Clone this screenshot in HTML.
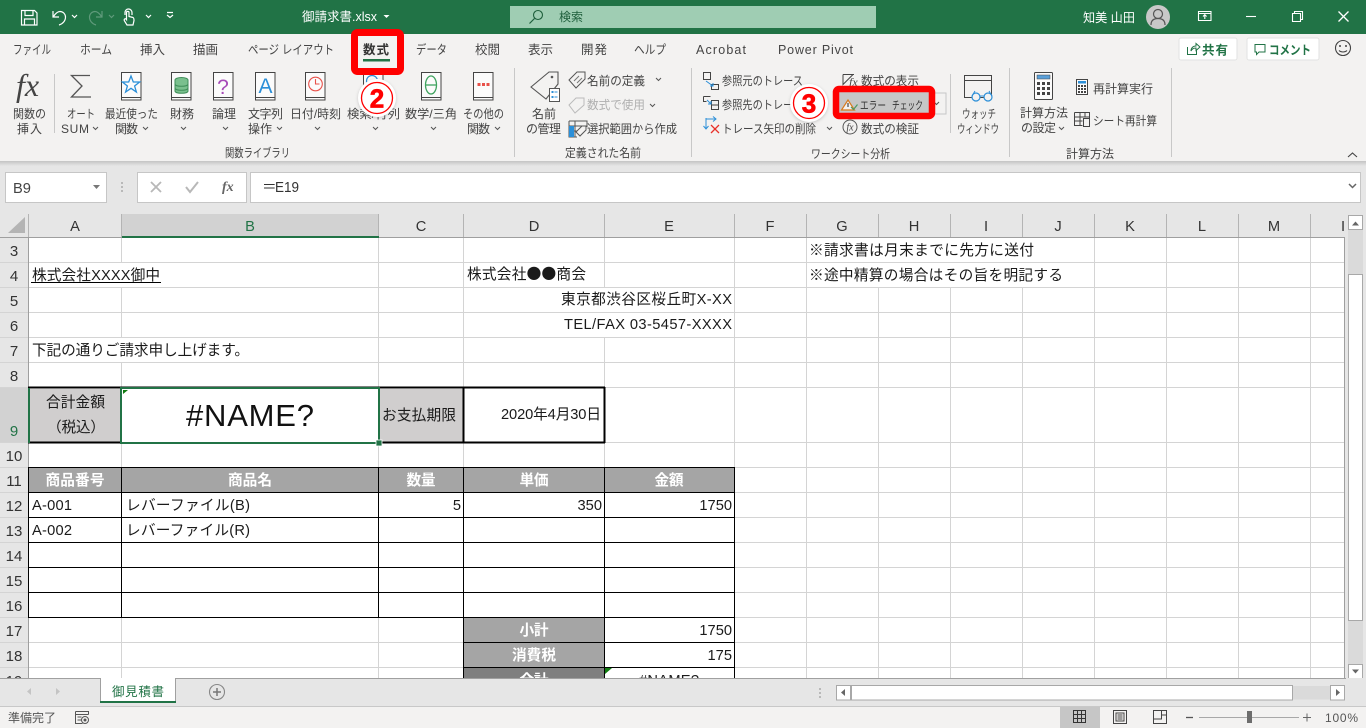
<!DOCTYPE html>
<html lang="ja"><head><meta charset="utf-8"><title>御請求書.xlsx - Excel</title>
<style>
html,body{margin:0;padding:0;background:#f3f2f1;width:1366px;height:728px;overflow:hidden}
svg{display:block;position:absolute;left:0;top:0}
text{font-family:"Liberation Sans","Noto Sans CJK JP",sans-serif}
.fx{font-family:"Liberation Serif",serif;font-style:italic}
.t{font-size:12.5px;fill:#444}
.r{font-size:12px;fill:#444}
.c{font-size:14.67px;fill:#1a1a1a}
.j{font-family:"Noto Sans CJK JP",sans-serif}
.h{font-size:14.67px;fill:#333;text-anchor:middle}
.n{font-size:15px;fill:#333;text-anchor:middle}
.w{font-size:14.67px;fill:#fff;text-anchor:middle;font-weight:700}
.e{text-anchor:end}
.m{text-anchor:middle}
</style></head><body>
<svg width="1366" height="728" viewBox="0 0 1366 728" xmlns="http://www.w3.org/2000/svg">
<defs>
<path id="bk" d="M.5 .5h19.5v27.5H.5zM.5 25.500h19.500" fill="#fbfbfb" stroke="#444" stroke-width="1"/>
<linearGradient id="sh" x1="0" y1="0" x2="0" y2="1"><stop offset="0" stop-color="#c4c4c4"/><stop offset="1" stop-color="#e6e6e6"/></linearGradient>
<filter id="bl" x="-30%" y="-30%" width="160%" height="160%"><feGaussianBlur stdDeviation="1.5"/></filter>
</defs>

<!-- backgrounds -->
<rect width="1366" height="728" fill="#e6e6e6"/>
<rect width="1366" height="34" fill="#217346"/>
<rect y="34" width="1366" height="127" fill="#f3f2f1"/>
<rect y="161" width="1366" height="5" fill="url(#sh)"/>

<!-- title bar -->
<g fill="none" stroke="#fff" stroke-width="1.2">
<path d="M21.500 10.500h13l2.500 2.500v12h-15.500zM25 10.500v5h8v-5M24.500 25v-6h10v6"/>
<path d="M53 11v6h6M53.500 16.500c2-3 4-5 6.500-5 3 0 5.500 2.500 5.500 5.500 0 4-3 7-6.500 8"/>
<path d="M72 15l2.500 2.500 2.500-2.500M146 15l2.500 2.500 2.500-2.500M167 15l3 2.500 3-2.500M167 12.500h6"/>
<path d="M125 15v-2.500a3.500 3.500 0 0 1 7 0V15M127 25l-2.500-4c-1-2 1-3 2-1.500V12.500c0-1.500 2.500-1.500 2.500 0v4l4 1c1 .5 1 1.500 1 3l-1 4.500z"/>
</g>
<g fill="none" stroke="#5f9a7b" stroke-width="1.200">
<path d="M102 11v6h-6M101.500 16.500c-2-3-4-5-6.500-5-3 0-5.500 2.500-5.500 5.500 0 4 3 7 6.500 8M109 15l2.500 2.500 2.500-2.500"/>
</g>
<text x="302" y="21" font-size="12.5" fill="#fff" textLength="75" lengthAdjust="spacingAndGlyphs">御請求書.xlsx</text>
<path d="M383.500 15h6l-3 3z" fill="#fff"/>
<rect x="510" y="6" width="366" height="22" fill="#9fcdb3"/>
<circle cx="538" cy="15" r="4.500" fill="none" stroke="#1f5f3c" stroke-width="1.100"/>
<path d="M534.500 18.500L529.500 23.500" stroke="#1f5f3c" stroke-width="1.200"/>
<text x="559" y="21" font-size="12" fill="#1f5f3c" textLength="24">検索</text>
<text x="1083" y="22" font-size="12.5" fill="#fff" textLength="52" lengthAdjust="spacingAndGlyphs">知美 山田</text>
<circle cx="1158" cy="17" r="12" fill="#c8c8c8"/>
<circle cx="1158" cy="14" r="4.500" fill="none" stroke="#555" stroke-width="1.200"/>
<path d="M1151 25c0-5 3-6.500 7-6.500s7 1.500 7 6.500" fill="none" stroke="#555" stroke-width="1.200"/>
<g fill="none" stroke="#fff" stroke-width="1.100">
<path d="M1198.500 11.500h12.500v9h-12.500zM1198.500 13.500h12.500M1204.800 19v-4M1203 16.500l1.800-1.800 1.800 1.800"/>
<path d="M1246 16.500h10"/>
<path d="M1292.500 13.500h8v8h-8zM1294.500 13.500v-2h8v8h-2"/>
<path d="M1338.500 11.500l10 10M1348.500 11.500l-10 10" stroke-width="1.300"/>
</g>

<!-- tabs -->
<g>
<text class="t" x="13" y="54" textLength="38" lengthAdjust="spacingAndGlyphs">ファイル</text>
<text class="t" x="80" y="54" textLength="32" lengthAdjust="spacingAndGlyphs">ホーム</text>
<text class="t" x="140" y="54" textLength="25">挿入</text>
<text class="t" x="193" y="54" textLength="25">描画</text>
<text class="t" x="248" y="54" textLength="31" lengthAdjust="spacingAndGlyphs">ページ</text>
<text class="t" x="282" y="54" textLength="52" lengthAdjust="spacingAndGlyphs">レイアウト</text>
<text class="t" x="416" y="54" textLength="31" lengthAdjust="spacingAndGlyphs">データ</text>
<text class="t" x="475" y="54" textLength="25">校閲</text>
<text class="t" x="528" y="54" textLength="25">表示</text>
<text class="t" x="581" y="54" textLength="26">開発</text>
<text class="t" x="634" y="54" textLength="32" lengthAdjust="spacingAndGlyphs">ヘルプ</text>
<text class="t" x="696" y="54" textLength="50">Acrobat</text>
<text class="t" x="778" y="54" textLength="75">Power Pivot</text>
</g>

<!-- share / comment -->
<rect x="1179" y="38" width="58" height="22" rx="2" fill="#fff" stroke="#e2e2e2"/>
<path d="M1187.500 47v7.500h9v-4M1191 51c0-3 2-5 5-5v-2.500l4 3.500-4 3.500V48c-2 0-4 1-5 3z" fill="none" stroke="#217346" stroke-width="1"/>
<text x="1202" y="54.5" font-size="12.5" font-weight="700" fill="#217346" textLength="26">共有</text>
<rect x="1247" y="38" width="72" height="22" rx="2" fill="#fff" stroke="#e2e2e2"/>
<path d="M1255 44.500h10v7.500h-6l-2.500 2.500V52h-1.500z" fill="none" stroke="#217346" stroke-width="1"/>
<text x="1269" y="54.5" font-size="12.5" font-weight="700" fill="#217346" textLength="42" lengthAdjust="spacingAndGlyphs">コメント</text>
<circle cx="1343" cy="48" r="7.500" fill="none" stroke="#444" stroke-width="1.100"/>
<circle cx="1340" cy="46" r="1" fill="#444"/><circle cx="1346" cy="46" r="1" fill="#444"/>
<path d="M1339 50.500c2 2 6 2 8 0" fill="none" stroke="#444"/>

<!-- ribbon separators -->
<path d="M54.500 74v59M514.500 68v89M691.500 68v89M950.500 74v59M1009.500 68v89M1171.500 68v89" stroke="#c8c8c8" stroke-width="1" fill="none"/>

<!-- function library icons -->
<text x="16" y="96" class="fx" font-size="32" fill="#444">fx</text>
<path d="M90 75.500H71.500L82 86 71.500 97H91" fill="none" stroke="#555" stroke-width="1.300"/>
<use href="#bk" x="121" y="72"/>
<path d="M131 76l2.300 6h6.300l-5 4 1.800 6-5.400-3.700-5.400 3.700 1.800-6-5-4h6.300z" fill="none" stroke="#2b8fd8" stroke-width="1.300"/>
<use href="#bk" x="171" y="72"/>
<g fill="#7ac08e" stroke="#3f8e59" stroke-width="1"><ellipse cx="181.500" cy="80" rx="6.500" ry="2.500"/><path d="M175 80v11c0 3 13 3 13 0V80" /><path d="M175 84c0 3 13 3 13 0M175 88c0 3 13 3 13 0" fill="none"/></g>
<use href="#bk" x="213" y="72"/>
<text x="223" y="94" class="m" font-size="21" fill="#a64ab8">?</text>
<use href="#bk" x="255" y="72"/>
<text x="265.5" y="93" class="m" font-size="21" fill="#2b8fd8">A</text>
<use href="#bk" x="305" y="72"/>
<circle cx="315.500" cy="84" r="6.800" fill="none" stroke="#e8514a" stroke-width="1.100"/>
<path d="M315.500 79v5h4" fill="none" stroke="#e8514a" stroke-width="1.100"/>
<use href="#bk" x="363" y="72"/>
<circle cx="372" cy="81" r="5.500" fill="none" stroke="#2b8fd8" stroke-width="1.200"/>
<use href="#bk" x="421" y="72"/>
<ellipse cx="431" cy="85" rx="5.500" ry="9" fill="none" stroke="#3fa35f" stroke-width="1.300"/>
<path d="M425.500 85h11" stroke="#3fa35f" stroke-width="1.300"/>
<use href="#bk" x="473" y="72"/>
<path d="M477.500 83h3v3h-3zM482 83h3v3h-3zM486.500 83h3v3h-3z" fill="#e8514a"/>

<g>
<text class="r" x="13" y="118" textLength="33" lengthAdjust="spacingAndGlyphs">関数の</text>
<text class="r" x="17" y="133" textLength="25">挿入</text>
<text class="r" x="67" y="118" textLength="28" lengthAdjust="spacingAndGlyphs">オート</text>
<text class="r" x="61" y="133" textLength="28">SUM</text>
<text class="r" x="105" y="118" textLength="53" lengthAdjust="spacingAndGlyphs">最近使った</text>
<text class="r" x="115" y="133" textLength="23">関数</text>
<text class="r" x="170" y="118" textLength="24">財務</text>
<text class="r" x="212" y="118" textLength="24">論理</text>
<text class="r" x="248" y="118" textLength="35">文字列</text>
<text class="r" x="248" y="133" textLength="24">操作</text>
<text class="r" x="290" y="118" textLength="51" lengthAdjust="spacingAndGlyphs">日付/時刻</text>
<text class="r" x="347" y="118" textLength="53" lengthAdjust="spacingAndGlyphs">検索/行列</text>
<text class="r" x="405" y="118" textLength="52" lengthAdjust="spacingAndGlyphs">数学/三角</text>
<text class="r" x="463" y="118" textLength="41" lengthAdjust="spacingAndGlyphs">その他の</text>
<text class="r" x="467" y="133" textLength="23">関数</text>
<text class="r" x="225" y="157" textLength="65" lengthAdjust="spacingAndGlyphs">関数ライブラリ</text>
</g>
<path d="M93 127l2.500 2.500 2.500-2.500M143 127l2.500 2.500 2.500-2.500M181 127l2.500 2.500 2.500-2.500M223 127l2.500 2.500 2.500-2.500M277 127l2.500 2.500 2.500-2.500M315 127l2.500 2.500 2.500-2.500M373 127l2.500 2.500 2.500-2.500M431 127l2.500 2.500 2.500-2.500M495 127l2.500 2.500 2.500-2.500M656 78l2.500 2.500 2.500-2.500M650 104l2.500 2.500 2.500-2.500M827 127l2.500 2.500 2.500-2.500M1059 127l2.500 2.500 2.500-2.500" fill="none" stroke="#555" stroke-width="1"/>

<!-- defined names -->
<path d="M531 87l18-15h9v12l-12 15z" fill="none" stroke="#555" stroke-width="1.100"/>
<circle cx="552" cy="77" r="1.300" fill="#555"/>
<rect x="549.500" y="88.500" width="10" height="13" fill="#fff" stroke="#555"/>
<path d="M551.500 91h2v2h-2zM551.500 96h2v2h-2z" fill="#2b8fd8"/><path d="M554.500 92h3M554.500 97h3" stroke="#2b8fd8"/>
<text class="r" x="532" y="118" textLength="24">名前</text>
<text class="r" x="526" y="133" textLength="35">の管理</text>
<path d="M569 80l8-8h8v7l-9 9z" fill="none" stroke="#555"/><path d="M574 81l5-5M577 83l5-5" stroke="#777"/>
<text class="r" x="587" y="85" textLength="58" lengthAdjust="spacingAndGlyphs">名前の定義</text>
<path d="M569 105l7-7h8v7l-9 8z" fill="none" stroke="#bbb"/>
<text class="r" x="587" y="109" textLength="58" lengthAdjust="spacingAndGlyphs" style="fill:#b0b0b0">数式で使用</text>
<path d="M569 121h18v6M569 121v16h8M575 121v16M569 126h18M569 131h8" fill="none" stroke="#555"/>
<rect x="569" y="126" width="5" height="11" fill="#2b8fd8"/>
<path d="M576 132l6-6h4v4l-6 6z" fill="#f3f2f1" stroke="#555"/>
<text class="r" x="587" y="133" textLength="90" lengthAdjust="spacingAndGlyphs">選択範囲から作成</text>
<text class="r" x="565" y="157" textLength="76" lengthAdjust="spacingAndGlyphs">定義された名前</text>

<!-- formula audit -->
<g fill="none" stroke="#444" stroke-width="1">
<path d="M703.500 72.500h7v7h-7zM711.500 84.500h7v5h-7z"/>
<path d="M703.500 96.500h7M703.500 96.500v5h3M711.500 100.500h7v9h-7zM711.500 105h7"/>
</g>
<path d="M706 81l7 5M713 83v3h-3M707 100l4 4M711 101v3h-3M706 118v11M703.500 126l2.500 3 2.500-3M706 119h10M713 116.500l3 2.500-3 2.500" fill="none" stroke="#2b8fd8" stroke-width="1"/>
<path d="M711 125l8 8M719 125l-8 8" stroke="#e8312a" stroke-width="1.300"/>
<text class="r" x="722" y="85" textLength="81" lengthAdjust="spacingAndGlyphs">参照元のトレース</text>
<text class="r" x="722" y="109" textLength="81" lengthAdjust="spacingAndGlyphs">参照先のトレース</text>
<text class="r" x="722" y="133" textLength="94" lengthAdjust="spacingAndGlyphs">トレース矢印の削除</text>
<path d="M843 74.500h11M843 74.500v10l10-10" fill="none" stroke="#444"/>
<text x="849" y="86" class="fx" font-size="12" fill="#444">fx</text>
<text class="r" x="861" y="85" textLength="58" lengthAdjust="spacingAndGlyphs">数式の表示</text>
<circle cx="850" cy="127" r="7" fill="none" stroke="#555"/>
<text x="850" y="130.5" class="fx m" font-size="10" fill="#444">fx</text>
<text class="r" x="861" y="133" textLength="58" lengthAdjust="spacingAndGlyphs">数式の検証</text>
<text class="r" x="811" y="158" textLength="79" lengthAdjust="spacingAndGlyphs">ワークシート分析</text>
<rect x="930" y="93" width="16" height="21" fill="#f3f2f1" stroke="#c6c6c6"/>
<path d="M934 102l2.500 2.500 2.500-2.500" fill="none" stroke="#555"/>

<!-- watch -->
<path d="M964.500 75.500h27v22h-27zM964.500 80.500h27" fill="none" stroke="#444"/>
<circle cx="976" cy="97" r="4" fill="#f3f2f1" stroke="#2b8fd8" stroke-width="1.200"/>
<circle cx="988" cy="97" r="4" fill="#f3f2f1" stroke="#2b8fd8" stroke-width="1.200"/>
<path d="M980 96h4M972 96l3-5M992 96l-3-5" fill="none" stroke="#2b8fd8"/>
<text class="r" x="962" y="118" textLength="34" lengthAdjust="spacingAndGlyphs">ウォッチ</text>
<text class="r" x="957" y="133" textLength="42" lengthAdjust="spacingAndGlyphs">ウィンドウ</text>

<!-- calculation -->
<rect x="1034.500" y="72.500" width="18" height="27" rx="1" fill="#fbfbfb" stroke="#444"/>
<rect x="1037" y="75" width="13" height="4" fill="#5a9fd8" stroke="#444" stroke-width=".5"/>
<path d="M1037 82h3v3h-3zM1042 82h3v3h-3zM1047 82h3v3h-3zM1037 87h3v3h-3zM1042 87h3v3h-3zM1047 87h3v3h-3zM1037 92h3v3h-3zM1042 92h3v3h-3zM1047 92h3v3h-3z" fill="#444"/>
<text class="r" x="1020" y="117" textLength="48">計算方法</text>
<text class="r" x="1021" y="132" textLength="35">の設定</text>
<rect x="1076.500" y="79.500" width="11" height="15" fill="#fbfbfb" stroke="#444"/>
<rect x="1078" y="81" width="8" height="2.500" fill="#2b8fd8"/>
<path d="M1078 85h2v2h-2zM1081 85h2v2h-2zM1084 85h2v2h-2zM1078 88h2v2h-2zM1081 88h2v2h-2zM1084 88h2v2h-2zM1078 91h2v2h-2zM1081 91h2v2h-2zM1084 91h2v2h-2z" fill="#444"/>
<text class="r" x="1093" y="93" textLength="60">再計算実行</text>
<path d="M1074.500 112.500h15v8M1074.500 112.500v13h8M1074.500 117h15M1074.500 121h8M1080 112.500v13M1085 112.500v5" fill="none" stroke="#444"/>
<rect x="1083.500" y="118.500" width="6" height="8" fill="#f3f2f1" stroke="#444"/>
<text class="r" x="1093" y="125" textLength="64" lengthAdjust="spacingAndGlyphs">シート再計算</text>
<text class="r" x="1066" y="158" textLength="48">計算方法</text>
<path d="M1348 157l4.500-4 4.500 4" fill="none" stroke="#444" stroke-width="1.100"/>

<!-- red annotation boxes -->
<rect x="354.500" y="32.500" width="46" height="39" rx="3" fill="#f3f2f1" stroke="#f00" stroke-width="7"/>
<text x="363" y="54" font-size="12.5" font-weight="700" fill="#333" textLength="26">数式</text>
<rect x="363" y="59" width="27" height="2.500" fill="#217346"/>
<rect x="836" y="89" width="96" height="27" rx="3" fill="#c6c6c6" stroke="#f00" stroke-width="6.500"/>
<path d="M848 100l-6.500 10h13z" fill="#f3f2f1" stroke="#d87a1d" stroke-width="1.200"/>
<path d="M848 103v4" stroke="#444" stroke-width="1.200"/>
<path d="M851 107l2.500 2.500 4-5" fill="none" stroke="#4a9a63" stroke-width="1.200"/>
<text x="860" y="109" font-size="11" fill="#333" textLength="26" lengthAdjust="spacingAndGlyphs">エラー</text>
<text x="892" y="109" font-size="11" fill="#333" textLength="31" lengthAdjust="spacingAndGlyphs">チェック</text>

<!-- circled numbers -->
<circle cx="377" cy="99" r="19" fill="#777" opacity=".35" filter="url(#bl)"/>
<circle cx="377" cy="98" r="19" fill="#fff"/>
<circle cx="377" cy="98" r="15.500" fill="#fff" stroke="#f00" stroke-width="1.300"/>
<text x="377" y="107.500" class="m" font-size="26" font-weight="700" fill="#f00" stroke="#f00" stroke-width=".7">2</text>
<circle cx="809" cy="104" r="19" fill="#777" opacity=".35" filter="url(#bl)"/>
<circle cx="809" cy="103" r="19" fill="#fff"/>
<circle cx="809" cy="103" r="15.500" fill="#fff" stroke="#f00" stroke-width="1.300"/>
<text x="809" y="112.500" class="m" font-size="26" font-weight="700" fill="#f00" stroke="#f00" stroke-width=".7">3</text>

<!-- formula bar -->
<rect x="5.500" y="172.500" width="101" height="30" fill="#fff" stroke="#c6c6c6"/>
<text x="13" y="193" font-size="14.67" fill="#444">B9</text>
<path d="M93 185h7l-3.500 4z" fill="#777"/>
<path d="M122 182v2M122 186v2M122 190v2" stroke="#aaa" stroke-width="1.500"/>
<rect x="137.500" y="172.500" width="109" height="30" fill="#fff" stroke="#c6c6c6"/>
<path d="M151 182l10 10M161 182l-10 10" stroke="#b8b8b8" stroke-width="1.800"/>
<path d="M186 187l4 5 8-10" fill="none" stroke="#b8b8b8" stroke-width="2"/>
<text x="222" y="191" class="fx" font-weight="700" font-size="14" fill="#666">fx</text>
<rect x="250.500" y="172.500" width="1110" height="30" fill="#fff" stroke="#c6c6c6"/>
<text x="262" y="192" class="j" font-size="14.67" fill="#333">＝</text>
<text x="275" y="192" font-size="14.67" fill="#333" textLength="24" lengthAdjust="spacingAndGlyphs">E19</text>
<path d="M1349 184l3.500 3.500 3.500-3.500" fill="none" stroke="#666" stroke-width="1.500"/>

<!-- sheet -->
<rect x="29" y="238" width="1315" height="440" fill="#fff"/>
<path d="M25 217v16H8z" fill="#b4b4b4"/>
<rect x="122" y="214" width="257" height="23" fill="#d2d2d2"/>
<rect x="0" y="388" width="28" height="55" fill="#d2d2d2"/>
<!-- header separators -->
<path d="M28.500 214v24M121.500 214v24M378.500 214v24M463.500 214v24M604.500 214v24M734.500 214v24M806.500 214v24M878.500 214v24M950.500 214v24M1022.500 214v24M1094.500 214v24M1166.500 214v24M1238.500 214v24M1310.500 214v24" stroke="#b4b4b4" fill="none"/>
<path d="M0 237.500H1344M28.500 237V678M1344.500 237V678" stroke="#9f9f9f" fill="none"/>
<rect x="122" y="236" width="257" height="2" fill="#217346"/>
<!-- gridlines -->
<path d="M0 262.500H1344M0 287.500H1344M0 312.500H1344M0 337.500H1344M0 362.500H1344M0 387.500H1344M0 442.500H1344M0 467.500H1344M0 492.500H1344M0 517.500H1344M0 542.500H1344M0 567.500H1344M0 592.500H1344M0 617.500H1344M0 642.500H1344M0 667.500H1344" stroke="#d4d4d4" fill="none"/>
<path d="M121.500 238V263M121.500 288V338M121.500 363V678M378.500 238V678M463.500 238V678M604.500 238V288M604.500 338V678M734.500 238V678M806.500 238V678M878.500 288V678M950.500 288V678M1022.500 288V678M1094.500 238V678M1166.500 238V678M1238.500 238V678M1310.500 238V678" stroke="#d4d4d4" fill="none"/>
<path d="M28.500 238V678" stroke="#9f9f9f" fill="none"/>

<!-- fills -->
<rect x="29" y="389" width="92" height="53" fill="#d0cece"/>
<rect x="379" y="389" width="84" height="53" fill="#d0cece"/>
<rect x="29" y="468" width="705" height="24" fill="#a5a5a5"/>
<rect x="464" y="618" width="140" height="49" fill="#a5a5a5"/>
<rect x="464" y="668" width="140" height="10" fill="#7f7f7f"/>

<!-- black borders -->
<path d="M28 467.500H735M28 492.500H735M28 517.500H735M28 542.500H735M28 567.500H735M28 592.500H735M28 617.500H735M463 642.500H735M463 667.500H735M28.500 467V618M121.500 467V618M378.500 467V618M463.500 467V678M604.500 467V678M734.500 467V678" stroke="#000" fill="none"/>
<path d="M28 387.500H605M28 442.500H605M463.500 387V443M604.500 387V443" stroke="#000" stroke-width="2" fill="none"/>

<!-- selection -->
<rect x="28" y="388" width="2" height="55" fill="#217346"/>
<rect x="121" y="388" width="258" height="55" fill="#fff" stroke="#217346" stroke-width="2"/>
<rect x="376" y="440" width="6" height="6" fill="#217346" stroke="#fff" stroke-width=".8"/>
<path d="M123 390h5l-5 4z" fill="#107c10"/>
<path d="M605 668h7l-7 6z" fill="#107c10"/>

<!-- column headers -->
<g>
<text class="h" x="75" y="231">A</text>
<text class="h" x="250" y="231" style="fill:#217346">B</text>
<text class="h" x="421" y="231">C</text>
<text class="h" x="534" y="231">D</text>
<text class="h" x="669" y="231">E</text>
<text class="h" x="770" y="231">F</text>
<text class="h" x="842" y="231">G</text>
<text class="h" x="914" y="231">H</text>
<text class="h" x="986" y="231">I</text>
<text class="h" x="1058" y="231">J</text>
<text class="h" x="1130" y="231">K</text>
<text class="h" x="1202" y="231">L</text>
<text class="h" x="1274" y="231">M</text>
<text class="h" x="1343" y="231">I</text>
</g>
<!-- row headers -->
<g>
<text class="n" x="14" y="256">3</text>
<text class="n" x="14" y="281">4</text>
<text class="n" x="14" y="306">5</text>
<text class="n" x="14" y="331">6</text>
<text class="n" x="14" y="356">7</text>
<text class="n" x="14" y="381">8</text>
<text class="n" x="14" y="436" style="fill:#217346">9</text>
<text class="n" x="14" y="461">10</text>
<text class="n" x="14" y="486">11</text>
<text class="n" x="14" y="511">12</text>
<text class="n" x="14" y="536">13</text>
<text class="n" x="14" y="561">14</text>
<text class="n" x="14" y="586">15</text>
<text class="n" x="14" y="611">16</text>
<text class="n" x="14" y="636">17</text>
<text class="n" x="14" y="661">18</text>
</g>
<!-- cells -->
<g>
<text class="c" x="809" y="255" textLength="225">※請求書は月末までに先方に送付</text>
<text class="c" x="809" y="280" textLength="254">※途中精算の場合はその旨を明記する</text>
<text class="c" x="32" y="280" textLength="128">株式会社XXXX御中</text>
<rect x="31" y="282" width="130" height="1" fill="#000"/>
<text class="c j" x="467" y="279" textLength="119">株式会社●●商会</text>
<text class="c" x="561" y="304" textLength="171">東京都渋谷区桜丘町X-XX</text>
<text class="c" x="564" y="329" textLength="168">TEL/FAX 03-5457-XXXX</text>
<text class="c" x="32" y="355" textLength="217">下記の通りご請求申し上げます。</text>
<text class="c" x="46" y="407" textLength="59">合計金額</text>
<text class="c" x="47" y="432" textLength="58">（税込）</text>
<text x="186" y="426" font-size="31" fill="#111" textLength="128">#NAME?</text>
<text class="c" x="382" y="420" textLength="74">お支払期限</text>
<text class="c" x="501" y="419" textLength="100">2020年4月30日</text>
<text class="w" x="75" y="485" textLength="59">商品番号</text>
<text class="w" x="250" y="485" textLength="44">商品名</text>
<text class="w" x="421" y="485" textLength="29">数量</text>
<text class="w" x="534" y="485" textLength="29">単価</text>
<text class="w" x="669" y="485" textLength="29">金額</text>
<text class="c" x="32" y="510" textLength="40">A-001</text>
<text class="c" x="126" y="510" textLength="124">レバーファイル(B)</text>
<text class="c e" x="461" y="510">5</text>
<text class="c e" x="602" y="510">350</text>
<text class="c e" x="732" y="510">1750</text>
<text class="c" x="32" y="535" textLength="40">A-002</text>
<text class="c" x="126" y="535" textLength="124">レバーファイル(R)</text>
<text class="w" x="534" y="635" textLength="29">小計</text>
<text class="c e" x="732" y="635">1750</text>
<text class="w" x="534" y="660" textLength="44">消費税</text>
<text class="c e" x="732" y="660">175</text>
</g>
<svg x="0" y="238" width="1344" height="440" viewBox="0 238 1344 440">
<text class="n" x="14" y="686">19</text>
<text class="w" x="534" y="685" textLength="29">合計</text>
<text class="c" x="639" y="685" textLength="60">#NAME?</text>
</svg>

<!-- vertical scrollbar -->
<rect x="1345" y="214" width="21" height="465" fill="#e6e6e6"/>
<rect x="1348" y="230" width="15" height="434" fill="#dadada"/>
<rect x="1348.500" y="215.500" width="14" height="14" fill="#fff" stroke="#a8a8a8"/>
<path d="M1352 225.500h7l-3.500-4z" fill="#666"/>
<rect x="1348.500" y="274.500" width="14" height="346" fill="#fff" stroke="#a8a8a8"/>
<rect x="1348.500" y="664.500" width="14" height="14" fill="#fff" stroke="#a8a8a8"/>
<path d="M1352 669.500h7l-3.500 4z" fill="#666"/>

<!-- sheet tabs bar -->
<rect x="0" y="678" width="1366" height="28" fill="#e6e6e6"/>
<rect x="0" y="678" width="1346" height="1" fill="#a0a0a0"/>
<path d="M31 688v7l-4-3.500zM56 688v7l4-3.500z" fill="#c4c4c4"/>
<path d="M100.500 678.500V702M175.500 678.500V702" stroke="#a0a0a0" fill="none"/>
<rect x="101" y="678" width="74" height="24" fill="#fff"/>
<rect x="100" y="701" width="76" height="2" fill="#217346"/>
<text x="112" y="696" font-size="12.5" fill="#217346" textLength="52">御見積書</text>
<circle cx="217" cy="692" r="7.500" fill="none" stroke="#888" stroke-width="1.100"/>
<path d="M213 692h8M217 688v8" stroke="#777" stroke-width="1.500"/>
<path d="M820 688v2M820 692v2M820 696v2" stroke="#aaa" stroke-width="1.500"/>
<rect x="836.500" y="685.500" width="508" height="14.500" fill="#dadada" stroke="#e6e6e6"/>
<rect x="836.500" y="685.500" width="14" height="14.500" fill="#fff" stroke="#a8a8a8"/>
<path d="M845 689v7l-4-3.500z" fill="#666"/>
<rect x="851.500" y="685.500" width="441" height="14.500" fill="#fff" stroke="#a8a8a8"/>
<rect x="1330.500" y="685.500" width="14" height="14.500" fill="#fff" stroke="#a8a8a8"/>
<path d="M1336 689v7l4-3.500z" fill="#666"/>

<!-- status bar -->
<rect x="0" y="706" width="1366" height="22" fill="#f3f2f1"/>
<rect x="0" y="706" width="1366" height="1" fill="#c8c8c8"/>
<text x="8" y="722" font-size="12" fill="#555" textLength="48">準備完了</text>
<path d="M75.500 711.500h13v3M75.500 711.500v12h7M75.500 714.500h13M77.500 717h4M77.500 720h4" fill="none" stroke="#555"/>
<circle cx="85" cy="720" r="3.500" fill="none" stroke="#555"/><circle cx="85" cy="720" r="1.500" fill="#555"/>
<rect x="1060" y="707" width="40" height="21" fill="#c6c6c6"/>
<path d="M1073.500 710.500h12v12h-12zM1077.500 710.500v12M1081.500 710.500v12M1073.500 714.500h12M1073.500 718.500h12" fill="none" stroke="#333"/>
<path d="M1113.500 710.500h13v13h-13zM1116 713h8v8h-8zM1117.500 715h5M1117.500 717h5M1117.500 719h5" fill="none" stroke="#444"/>
<path d="M1153.500 710.500h13v13h-13zM1153.500 719h8v-8.500M1161.500 715h5" fill="none" stroke="#444"/>
<path d="M1186 717.500h7" stroke="#555" stroke-width="1.300"/>
<rect x="1199" y="717" width="100" height="1" fill="#a8a8a8"/>
<rect x="1247" y="711" width="5" height="12" fill="#6d6d6d"/>
<path d="M1303 717.500h8M1307 713.500v8" stroke="#666" stroke-width="1"/>
<text x="1325" y="722" font-size="12" fill="#555" textLength="33">100%</text>
</svg>
</body></html>
